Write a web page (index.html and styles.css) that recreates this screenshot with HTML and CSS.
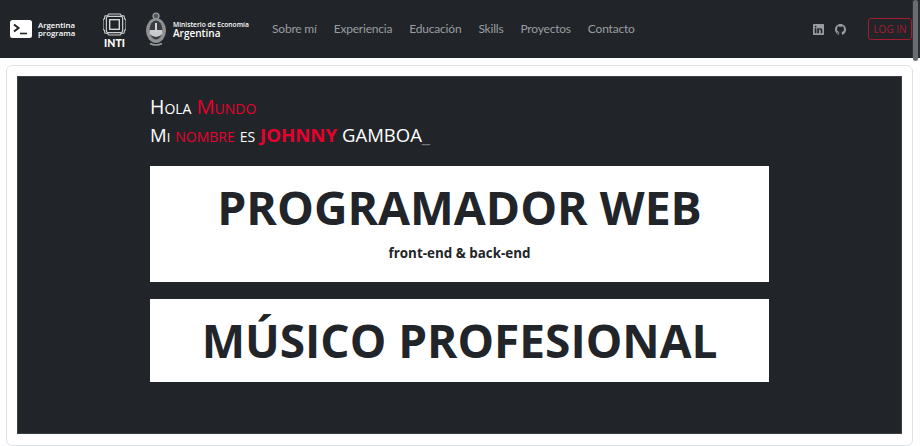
FILE: index.html
```html
<!DOCTYPE html>
<html lang="es">
  <head>
    <meta charset="utf-8">
    <title>Johnny Gamboa</title>
    <link rel="stylesheet" href="styles.css">
  </head>
  <body>
    <nav class="navbar">
      <div class="brand brand-ap">
        <svg class="ap-icon" viewBox="0 0 22 18">
          <rect width="22" height="18" rx="2.500" fill="#fff" />
          <path d="M4 4.500 8.500 8 4 11.500" fill="none" stroke="#212529" stroke-width="2" />
          <path d="M10 13.500h7" stroke="#212529" stroke-width="1.600" />
        </svg>
        <span class="ap-text">Argentina<br>programa</span>
      </div>
      <div class="brand brand-inti">
        <svg class="inti-icon" viewBox="0 0 24 24">
          <path d="M6 1h12l1 1.500 3 .5.500 3L24 7v10l-1.500 1-.5 3-3 .5-1 1.500H6l-1-1.500-3-.5-.5-3L0 17V7l1.500-1 .5-3 3-.5z" fill="none" stroke="#cfd0d1" stroke-width="1.100" />
          <rect x="3.500" y="3.500" width="17" height="17" rx="2" fill="none" stroke="#cfd0d1" stroke-width="1.200" />
          <rect x="7" y="7" width="10" height="10" fill="none" stroke="#e8e8e8" stroke-width="1.300" />
        </svg>
        <span class="inti-text">INTI</span>
      </div>
      <div class="brand brand-min">
        <svg class="shield" viewBox="0 0 20 34">
          <circle cx="10" cy="4" r="3" fill="#55585b" stroke="#a5a7a9" stroke-width="1.200" />
          <ellipse cx="10" cy="18.500" rx="10" ry="12.500" fill="#8f9193" />
          <ellipse cx="10" cy="18" rx="6.500" ry="9.500" fill="#3a3e42" />
          <path d="M3.600 18h12.800v4q-6.400 6-12.800 0z" fill="#c8cacc" />
          <path d="M9 11h2v9H9z" fill="#d4d4d4" />
          <path d="M4 31.500q6 3 12 0" fill="none" stroke="#9a9c9e" stroke-width="1.400" />
        </svg>
        <span class="min-text"><small>Ministerio de Economía</small>Argentina</span>
      </div>
      <ul class="nav-links">
        <li><a href="#">Sobre mí</a></li>
        <li><a href="#">Experiencia</a></li>
        <li><a href="#">Educación</a></li>
        <li><a href="#">Skills</a></li>
        <li><a href="#">Proyectos</a></li>
        <li><a href="#">Contacto</a></li>
      </ul>
      <div class="nav-right">
        <svg class="social" viewBox="0 0 16 16">
          <path fill="#9a9da0" d="M0 1.150C0 .5.500 0 1.200 0h13.600c.7 0 1.200.5 1.200 1.150v13.700c0 .65-.5 1.150-1.200 1.150H1.200C.5 16 0 15.500 0 14.850zM4.900 13.400V6.200H2.500v7.200zM3.700 5.200c.85 0 1.350-.55 1.350-1.250C5.030 3.250 4.550 2.700 3.730 2.700S2.350 3.250 2.350 3.950c0 .7.520 1.250 1.330 1.250zM8.600 13.400v-4c0-.2.020-.45.080-.6.180-.45.570-.9 1.250-.9.880 0 1.230.67 1.230 1.650v3.850h2.400V9.270c0-2.200-1.180-3.240-2.750-3.240-1.270 0-1.850.7-2.170 1.200V6.200H6.200c.03.680 0 7.200 0 7.200z" />
        </svg>
        <svg class="social" viewBox="0 0 16 16">
          <path fill="#9a9da0" d="M8 0C3.580 0 0 3.580 0 8c0 3.540 2.290 6.530 5.470 7.590.4.070.55-.17.55-.38 0-.19-.01-.82-.01-1.490-2.010.37-2.530-.49-2.690-.94-.09-.23-.48-.94-.82-1.130-.28-.15-.68-.52-.01-.53.630-.01 1.080.58 1.230.82.720 1.210 1.870.87 2.330.66.070-.52.280-.87.510-1.070-1.780-.2-3.640-.89-3.640-3.950 0-.87.310-1.590.820-2.150-.08-.2-.36-1.020.08-2.120 0 0 .67-.21 2.200.82.640-.18 1.320-.27 2-.27s1.360.09 2 .27c1.530-1.040 2.200-.82 2.200-.82.440 1.100.16 1.920.08 2.120.51.560.82 1.270.82 2.150 0 3.070-1.870 3.750-3.650 3.950.29.250.54.730.54 1.480 0 1.070-.01 1.930-.01 2.200 0 .21.150.46.550.38A8.010 8.010 0 0 0 16 8c0-4.420-3.580-8-8-8z" />
        </svg>
        <button class="btn-login">LOG IN</button>
      </div>
    </nav>

    <main class="card">
      <section class="hero">
        <div class="hero-inner">
          <h2 class="greeting"><span class="word-hola">Hola</span> <span class="red word-mundo">Mundo</span></h2>
          <h2 class="greeting"><span class="word-mi">Mi</span> <span class="red word-nombre">nombre</span> <span class="word-es">es</span> <strong class="red name">JOHNNY</strong> <span class="word-surname">GAMBOA</span><span class="cursor">_</span></h2>
          <div class="panel panel-web">
            <h1>PROGRAMADOR WEB</h1>
            <p>front-end &amp; back-end</p>
          </div>
          <div class="panel panel-music">
            <h1>MÚSICO PROFESIONAL</h1>
          </div>
        </div>
      </section>
    </main>

    <div class="scrollbar"><div class="scroll-thumb"></div></div>
  </body>
</html>
```

FILE: styles.css
```css
* {
  box-sizing: border-box;
}
html,
body {
  height: 446px;
  overflow: hidden;
}
body {
  margin: 0;
  background: #fff;
  font-family: "Open Sans", "Noto Sans", sans-serif;
  color: #212529;
}
.navbar {
  display: flex;
  align-items: center;
  height: 58px;
  padding: 0 8px 0 10px;
  background: #212529;
}
.brand {
  display: flex;
  align-items: center;
  color: #fff;
}
.brand-ap {
  gap: 6px;
  width: 93px;
}
.ap-icon {
  width: 22px;
  height: 18px;
}
.ap-text {
  font-size: 7.800px;
  font-weight: 600;
  line-height: 8px;
}
.brand-inti {
  flex-direction: column;
  width: 23px;
  margin-top: 3px;
}
.inti-icon {
  width: 23px;
  height: 23px;
}
.inti-text {
  margin-top: 3px;
  font-family: "Lato", sans-serif;
  font-size: 10.500px;
  font-weight: 900;
  line-height: 9px;
}
.brand-min {
  gap: 7px;
  width: 126px;
  margin-left: 20px;
}
.shield {
  width: 20px;
  height: 34px;
}
.min-text {
  display: flex;
  flex-direction: column;
  font-size: 10px;
  font-weight: 600;
  line-height: 9px;
}
.min-text small {
  font-size: 6.700px;
  line-height: 8px;
  white-space: nowrap;
}
.nav-links {
  display: flex;
  gap: 17px;
  margin: 0 0 2px;
  padding: 0;
  list-style: none;
  font-family: "Lato", sans-serif;
  font-size: 12px;
  letter-spacing: -0.2px;
}
.nav-links a {
  color: #9a9da0;
  text-decoration: none;
}
.nav-right {
  display: flex;
  align-items: center;
  margin-left: auto;
}
.social {
  width: 11px;
  height: 11px;
  margin-right: 11px;
}
.btn-login {
  width: 44px;
  height: 22px;
  margin-left: 11px;
  padding: 0;
  border: 1px solid #a51c30;
  border-radius: 3px;
  background: transparent;
  color: #a51c30;
  font-family: inherit;
  font-size: 10px;
}
.card {
  height: 381px;
  margin: 7px 7px 0 6px;
  padding: 10px;
  border: 1px solid #dee2e6;
  border-radius: 6px;
}
.hero {
  height: 358px;
  border: 1px solid #3a3f44;
  background: #212529;
}
.hero-inner {
  width: 619px;
  margin-left: 132px;
  padding-top: 18px;
}
.greeting {
  height: 22px;
  margin: 0 0 6px;
  color: #fff;
  font-size: 19px;
  font-weight: 400;
  font-variant: small-caps;
  line-height: 22px;
}
.red {
  color: #e8002d;
}
.name {
  font-size: 18.600px;
  font-weight: 700;
}
.word-hola {
  font-size: 19.500px;
}
.word-mundo {
  font-size: 20.300px;
}
.word-mi {
  font-size: 18.500px;
}
.word-nombre {
  font-size: 20px;
}
.word-es {
  font-size: 20.500px;
}
.word-surname {
  font-size: 18.500px;
}
.cursor {
  color: #6c757d;
}
.panel {
  display: flex;
  flex-direction: column;
  align-items: center;
  background: #fff;
}
.panel h1 {
  margin: 0;
  color: #212529;
  font-weight: 700;
  line-height: 56px;
}
.panel p {
  margin: 8px 0 0;
  font-size: 13.400px;
  font-weight: 700;
  line-height: 20px;
}
.panel-web {
  height: 116px;
  margin-top: 21px;
  padding-top: 13px;
}
.panel-web h1 {
  font-size: 46.400px;
}
.panel-music {
  height: 83px;
  margin-top: 17px;
  padding-top: 13px;
}
.panel-music h1 {
  font-size: 46px;
}
.scrollbar {
  position: absolute;
  top: 0;
  right: 0;
  width: 8px;
  height: 58px;
  background: #2b2f33;
}
.scroll-thumb {
  width: 5px;
  height: 61px;
  margin-left: 1px;
  border-radius: 3px;
  background: #6a6d70;
}
```
